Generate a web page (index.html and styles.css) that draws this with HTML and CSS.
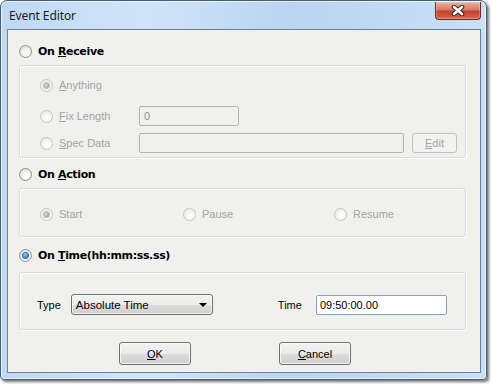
FILE: index.html
```html
<!DOCTYPE html>
<html>
<head>
<meta charset="utf-8">
<link rel="stylesheet" href="styles.css">
</head>
<body>
<div class="window">
  <div class="titlebar">
    <span class="title">Event Editor</span>
    <div class="close">
      <svg width="14" height="11" viewBox="0 0 14 11">
        <path d="M3 2 L11 9 M11 2 L3 9" stroke="#3b2320" stroke-width="4.6" stroke-linecap="round" fill="none"/>
        <path d="M3 2 L11 9 M11 2 L3 9" stroke="#ffffff" stroke-width="2.6" stroke-linecap="round" fill="none"/>
      </svg>
    </div>
  </div>
  <div class="client">
    <div class="header">
      <span class="radio"></span>
      <span class="hlabel">On <u>R</u>eceive</span>
    </div>
    <div class="group g1">
      <div class="row r1">
        <span class="opt"><span class="radio dis checked"></span><span class="dlabel"><u>A</u>nything</span></span>
      </div>
      <div class="row r2">
        <span class="opt wide"><span class="radio dis"></span><span class="dlabel"><u>F</u>ix Length</span></span>
        <span class="dinput short">0</span>
      </div>
      <div class="row r3">
        <span class="opt wide"><span class="radio dis"></span><span class="dlabel"><u>S</u>pec Data</span></span>
        <span class="dinput long"></span>
        <span class="dbutton"><u>E</u>dit</span>
      </div>
    </div>
    <div class="header h2">
      <span class="radio"></span>
      <span class="hlabel">On <u>A</u>ction</span>
    </div>
    <div class="group g2">
      <div class="row">
        <span class="opt a1"><span class="radio dis checked"></span><span class="dlabel">Start</span></span>
        <span class="opt a2"><span class="radio dis"></span><span class="dlabel">Pause</span></span>
        <span class="opt"><span class="radio dis"></span><span class="dlabel">Resume</span></span>
      </div>
    </div>
    <div class="header h3">
      <span class="radio on"></span>
      <span class="hlabel">On <u>T</u>ime(hh:mm:ss.ss)</span>
    </div>
    <div class="group g3">
      <div class="row">
        <span class="label">Type</span>
        <span class="select"><span>Absolute Time</span><span class="arrow"></span></span>
        <span class="label time">Time</span>
        <span class="tinput">09:50:00.00</span>
      </div>
    </div>
    <div class="buttons">
      <span class="button"><u>O</u>K</span>
      <span class="button"><u>C</u>ancel</span>
    </div>
  </div>
</div>
</body>
</html>
```

FILE: styles.css
```css
html, body {
  margin: 0;
  padding: 0;
  background: #ffffff;
}
body {
  width: 492px;
  height: 384px;
  overflow: hidden;
}
.window {
  width: 487px;
  height: 380px;
  box-sizing: border-box;
  border: 1px solid #47607a;
  border-radius: 7px 7px 4px 4px;
  background: linear-gradient(90deg, #bfd9f3 0%, #cfe4f8 30%, #b9d5f1 60%, #c9e0f6 100%);
  box-shadow: 2px 2px 3px rgba(0,0,0,0.55), inset 0 0 0 1px rgba(255,255,255,0.6);
  display: flex;
  flex-direction: column;
  padding: 0 5px 6px 6px;
}
.titlebar {
  height: 28px;
  display: flex;
  align-items: flex-start;
  justify-content: space-between;
  flex-shrink: 0;
}
.title {
  font-family: "Noto Sans", "Open Sans", sans-serif;
  font-size: 12px;
  color: #1a1a1a;
  margin-top: 6px;
  margin-left: 2px;
  letter-spacing: -0.1px;
}
.close {
  width: 46px;
  height: 18px;
  margin-top: 1px;
  box-sizing: border-box;
  border: 1px solid #6b2a22;
  border-top: none;
  border-radius: 0 0 4px 4px;
  background: linear-gradient(180deg, #eab0a2 0%, #d97a66 45%, #c2412c 55%, #d6664f 100%);
  box-shadow: inset 0 0 0 1px rgba(255,255,255,0.25);
  display: flex;
  align-items: center;
  justify-content: center;
}
.close svg { display: block; }
.client {
  flex: 1;
  box-sizing: border-box;
  background: #f0f0ed;
  border: 1px solid #6d7f92;
  display: flex;
  flex-direction: column;
  padding-left: 11px;
  font-family: "Liberation Sans", Arial, sans-serif;
  font-size: 11px;
  color: #000;
}
u {
  text-decoration: underline;
  text-underline-offset: 1px;
}
.header {
  height: 16px;
  margin-top: 13px;
  display: flex;
  align-items: center;
}
.header.h2 { margin-top: 8px; }
.header.h3 { margin-top: 10px; }
.hlabel {
  font-family: "DejaVu Sans", sans-serif;
  font-weight: bold;
  font-size: 11px;
  margin-left: 6px;
  letter-spacing: -0.35px;
}
.radio {
  width: 13px;
  height: 13px;
  box-sizing: border-box;
  border-radius: 50%;
  border: 1px solid #8f8f8f;
  background: radial-gradient(circle at 60% 65%, #ffffff 0%, #f4f4f4 35%, #d3d3d3 100%);
  position: relative;
  flex-shrink: 0;
}
.radio.dis {
  border-color: #c5c5c5;
  background: radial-gradient(circle at 60% 65%, #ffffff 0%, #f6f6f6 40%, #e3e3e3 100%);
}
.radio.checked::after,
.radio.on::after {
  content: "";
  position: absolute;
  left: 3px;
  top: 3px;
  width: 5px;
  height: 5px;
  border-radius: 50%;
}
.radio.checked::after {
  background: radial-gradient(circle at 40% 40%, #dedede 0%, #a9a9a9 60%, #8d8d8d 100%);
  box-shadow: 0 0 0 1px #bdbdbd;
}
.radio.on::after {
  background: radial-gradient(circle at 40% 35%, #9fdcff 0%, #2a8ad6 55%, #0d4f8f 100%);
  box-shadow: 0 0 0 1px #3c6e9a;
}
.group {
  width: 447px;
  box-sizing: border-box;
  border: 1px solid #d5dde4;
  border-radius: 3px;
  box-shadow: inset 1px 1px 0 #ffffff, 1px 1px 0 #ffffff;
  margin-top: 6px;
  display: flex;
  flex-direction: column;
  padding-left: 20px;
}
.g1 { height: 93px; }
.g2 { height: 49px; margin-top: 6px; }
.g3 { height: 58px; margin-top: 9px; padding-left: 17px; }
.row {
  height: 20px;
  display: flex;
  align-items: center;
}
.g1 .r1 { margin-top: 9px; }
.g1 .r2 { margin-top: 11px; }
.g1 .r3 { margin-top: 7px; }
.g2 .row { margin-top: 15px; }
.g3 .row { margin-top: 21px; height: 21px; }
.opt {
  display: flex;
  align-items: center;
}
.opt.wide { width: 99px; }
.opt.a1 { width: 143px; }
.opt.a2 { width: 151px; }
.dlabel {
  color: #a3a3a3;
  margin-left: 6px;
}
.dinput {
  height: 20px;
  box-sizing: border-box;
  border: 1px solid #b4b4b4;
  border-radius: 2px;
  background: #f0f0ed;
  color: #8d8d8d;
  padding-left: 4px;
  line-height: 18px;
}
.dinput.short { width: 100px; }
.dinput.long { width: 265px; }
.dbutton {
  width: 45px;
  height: 20px;
  margin-left: 8px;
  box-sizing: border-box;
  border: 1px solid #c1c1c1;
  border-radius: 3px;
  background: #f2f2f0;
  color: #a3a3a3;
  display: flex;
  align-items: center;
  justify-content: center;
}
.label { color: #000; }
.select {
  width: 142px;
  height: 21px;
  margin-left: 10px;
  box-sizing: border-box;
  border: 1px solid #707070;
  border-radius: 3px;
  background: linear-gradient(180deg, #f2f2f2 0%, #ebebeb 50%, #dddddd 51%, #cfcfcf 100%);
  box-shadow: inset 0 0 0 1px rgba(255,255,255,0.7);
  display: flex;
  align-items: center;
  justify-content: space-between;
  padding: 0 5px 0 4px;
  font-size: 11.5px;
}
.arrow {
  width: 0;
  height: 0;
  border-left: 4px solid transparent;
  border-right: 4px solid transparent;
  border-top: 4px solid #000;
}
.label.time { margin-left: 65px; }
.tinput {
  width: 131px;
  height: 20px;
  margin-left: 14px;
  box-sizing: border-box;
  border: 1px solid #7da2ce;
  border-radius: 2px;
  background: #ffffff;
  padding-left: 3px;
  line-height: 18px;
  color: #000;
}
.buttons {
  display: flex;
  margin-top: 12px;
  padding-left: 100px;
  gap: 88px;
}
.button {
  width: 72px;
  height: 23px;
  box-sizing: border-box;
  border: 1px solid #707070;
  border-radius: 3px;
  background: linear-gradient(180deg, #f2f2f2 0%, #ebebeb 50%, #dddddd 51%, #cfcfcf 100%);
  box-shadow: inset 0 0 0 1px rgba(255,255,255,0.75);
  display: flex;
  align-items: center;
  justify-content: center;
  color: #000;
}
```
